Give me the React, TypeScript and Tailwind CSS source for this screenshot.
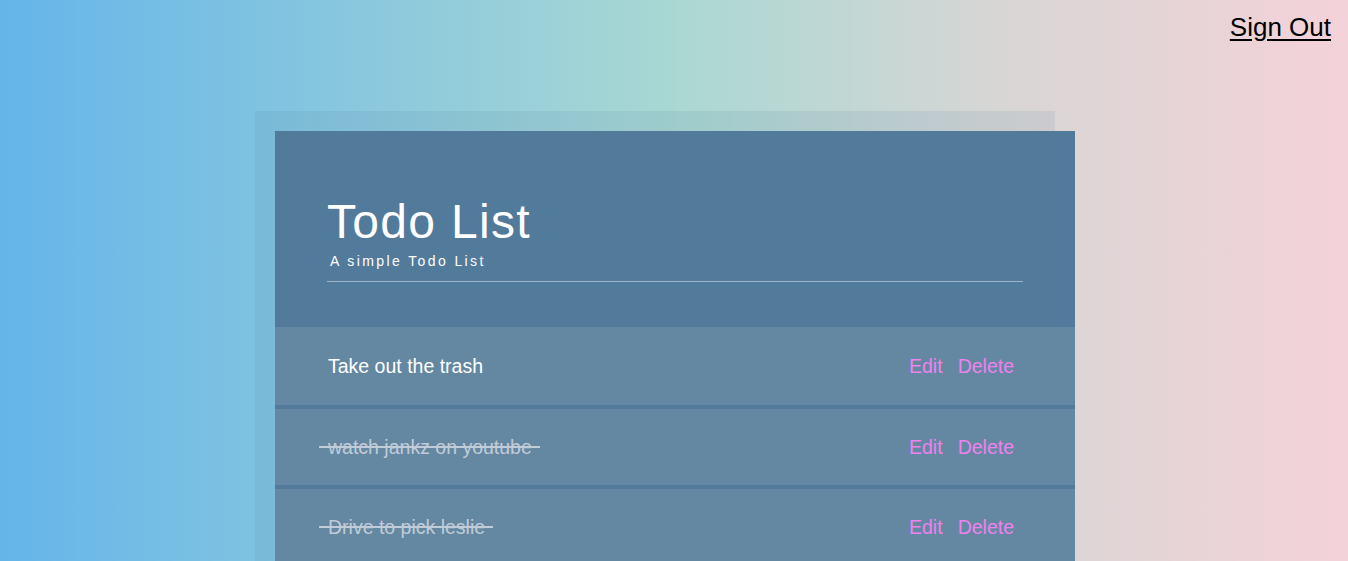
const todos = [
  { id: 1, text: 'Take out the trash', done: false, h: 'h-[78px]' },
  { id: 2, text: 'watch jankz on youtube', done: true, h: 'h-[76px]' },
  { id: 3, text: 'Drive to pick leslie', done: true, h: 'h-[76px]' },
];

function App() {
  return (
    <div className="min-h-screen bg-[linear-gradient(to_right,#65b5ea_0%,#a9d8d3_50%,#d9d6d5_75%,#f4d2d9_100%)] font-['Liberation_Sans',Arial,sans-serif] overflow-hidden">
      {/* Sign out link */}
      <div className="flex justify-end pt-[12px] pr-[17px]">
        <a href="#" className="text-[26px] leading-[30px] text-black underline underline-offset-[3px]">
          Sign Out
        </a>
      </div>

      {/* Card with offset backdrop */}
      <div className="flex justify-center pt-[89px] pl-[2px]">
        <div className="w-[800px] bg-[#527a9a] pb-[60px] shadow-[-20px_-20px_0_rgba(82,122,154,0.12)]">
          <header className="pt-[63px] pb-[45px] px-[52px]">
            <h1 className="text-[48px] leading-[55px] text-white tracking-[1.3px]">Todo List</h1>
            <p className="mt-[4px] pl-[3px] text-[14px] leading-[16px] tracking-[2.4px] text-white">
              A simple Todo List
            </p>
            <hr className="mt-[12px] border-0 h-px bg-[#9fb3c5]" />
          </header>

          <ul className="flex flex-col gap-[4px]">
            {todos.map((todo) => (
              <li
                key={todo.id}
                className={`flex items-center justify-between ${todo.h} bg-[#6487a2] pl-[53px] pr-[61px] text-[19.5px] leading-[22px]`}
              >
                {todo.done ? (
                  <span className="relative text-[#c0ccd7]">
                    {todo.text}
                    <span className="absolute left-[-9px] right-[-8px] top-[10px] h-[2px] bg-[#c0ccd7]" />
                  </span>
                ) : (
                  <span className="text-white">{todo.text}</span>
                )}
                <div className="flex gap-[15px] text-[#ee82ee]">
                  <button>Edit</button>
                  <button>Delete</button>
                </div>
              </li>
            ))}
          </ul>
        </div>
      </div>
    </div>
  );
}

export default App;
